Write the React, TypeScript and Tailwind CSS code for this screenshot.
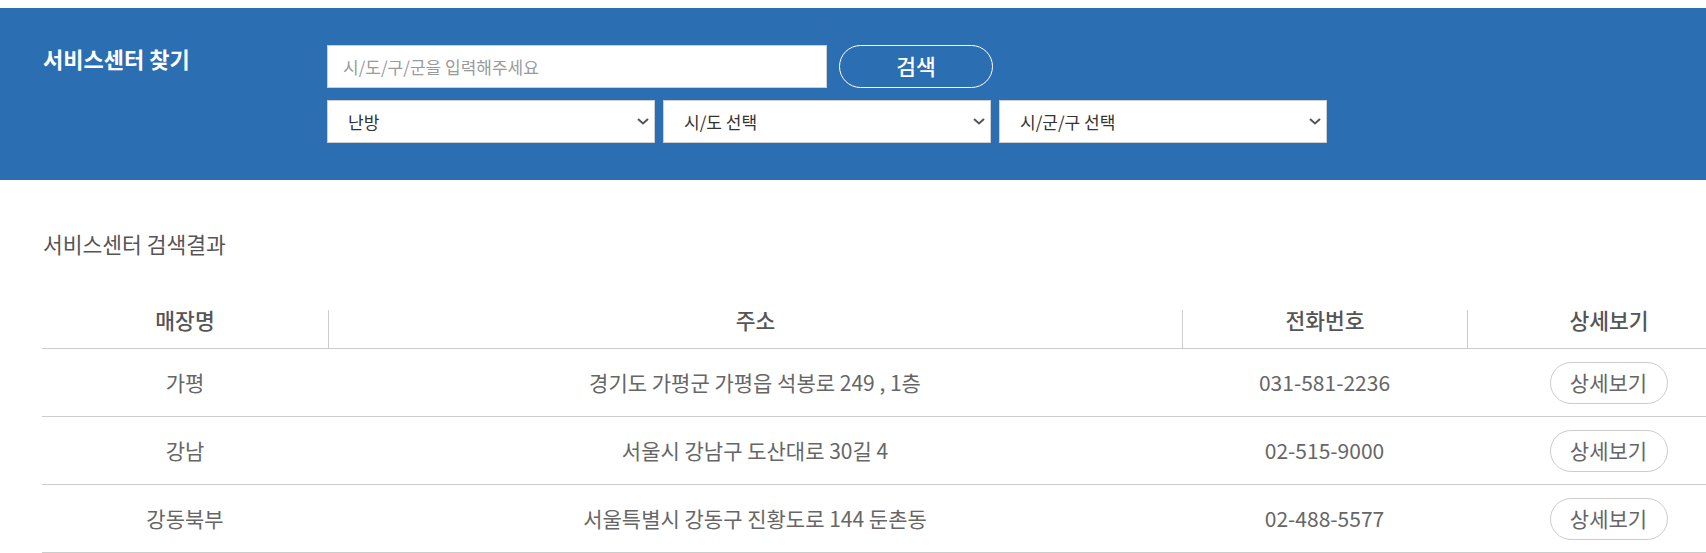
import { useState } from "react";

type Center = {
    name: string;
    address: string;
    phone: string;
};

const centers: Center[] = [
    { name: "가평", address: "경기도 가평군 가평읍 석봉로 249 , 1층", phone: "031-581-2236" },
    { name: "강남", address: "서울시 강남구 도산대로 30길 4", phone: "02-515-9000" },
    { name: "강동북부", address: "서울특별시 강동구 진황도로 144 둔촌동", phone: "02-488-5577" },
];

function Chevron() {
    return (
        <svg width="12" height="7" viewBox="0 0 12 7" className="pointer-events-none absolute right-[6px] top-[18px]">
            <polyline points="1,1 6,5.5 11,1" fill="none" stroke="#555" strokeWidth="2" />
        </svg>
    );
}

function SelectBox({ options }: { options: string[] }) {
    return (
        <div className="relative w-[328px] h-[43px]">
            <select
                defaultValue={options[0]}
                className="appearance-none w-full h-full bg-white border border-[#cfcfcf] pl-[20px] pr-8 text-[17px] text-[#333] outline-none"
            >
                {options.map((o) => (
                    <option key={o} value={o}>
                        {o}
                    </option>
                ))}
            </select>
            <Chevron />
        </div>
    );
}

export default function App() {
    const [keyword, setKeyword] = useState("");

    return (
        <div className="w-full overflow-hidden bg-white pt-2 font-['Noto_Sans_CJK_KR',sans-serif]">
            {/* search panel */}
            <div className="h-[172px] bg-[#2b6eb2] flex pl-[43px] pt-[35px]">
                <h2 className="w-[284px] text-[22px] leading-[30px] font-bold text-white">서비스센터 찾기</h2>
                <div className="flex flex-col gap-[12px] pt-[2px]">
                    <div className="flex gap-[12px]">
                        <input
                            value={keyword}
                            onChange={(e) => setKeyword(e.target.value)}
                            placeholder="시/도/구/군을 입력해주세요"
                            className="w-[500px] h-[43px] bg-white border border-[#cfcfcf] px-[15px] text-[17px] text-[#333] placeholder:text-[#9a9a9a] outline-none"
                        />
                        <button className="w-[154px] h-[43px] rounded-full border border-white text-white text-[21.5px] font-medium">
                            검색
                        </button>
                    </div>
                    <div className="flex gap-[8px]">
                        <SelectBox options={["난방", "냉방"]} />
                        <SelectBox options={["시/도 선택"]} />
                        <SelectBox options={["시/군/구 선택"]} />
                    </div>
                </div>
            </div>

            {/* results */}
            <div className="pl-[42px] pt-[49px]">
                <h3 className="pl-px text-[21.5px] leading-[30px] text-[#555]">서비스센터 검색결과</h3>
                <div className="w-[1708px] mt-[51px]">
                    <div className="grid grid-cols-[286px_854px_285px_283px] h-[39px] border-b border-[#cccccc] text-[21.5px] leading-[20px] font-medium text-[#555]">
                        <div className="text-center">매장명</div>
                        <div className="text-center border-l border-[#cccccc]">주소</div>
                        <div className="text-center border-l border-[#cccccc]">전화번호</div>
                        <div className="text-center border-l border-[#cccccc]">상세보기</div>
                    </div>
                    {centers.map((c) => (
                        <div
                            key={c.name}
                            className="grid grid-cols-[286px_854px_285px_283px] h-[68px] border-b border-[#cccccc] items-center text-[21px] text-[#666]"
                        >
                            <div className="text-center">{c.name}</div>
                            <div className="text-center">{c.address}</div>
                            <div className="text-center">{c.phone}</div>
                            <div className="flex justify-center">
                                <button className="w-[118px] h-[42px] rounded-full border border-[#cccccc] bg-white text-[21px] text-[#666]">
                                    상세보기
                                </button>
                            </div>
                        </div>
                    ))}
                </div>
            </div>
        </div>
    );
}
